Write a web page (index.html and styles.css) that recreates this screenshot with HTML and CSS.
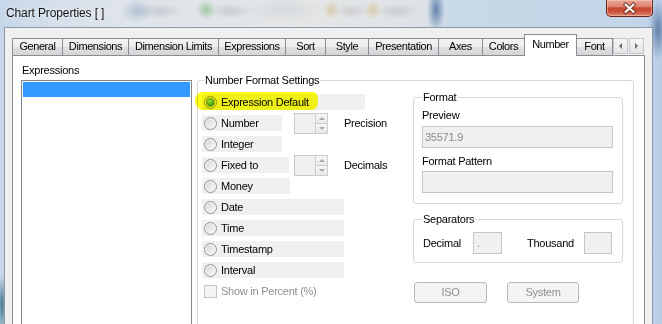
FILE: index.html
```html
<!DOCTYPE html>
<html>
<head>
<meta charset="utf-8">
<title>Chart Properties</title>
<link rel="stylesheet" href="styles.css">
</head>
<body>
<div class="window">
  <div class="titlebar">
    <span class="title">Chart Properties [ ]</span>
    <span class="close">
      <svg width="47" height="17" viewBox="0 0 47 17">
        <path d="M19.5 4.5 L27.5 12 M27.5 4.5 L19.5 12" stroke="#5b2318" stroke-width="4.2" stroke-linecap="square" opacity="0.75" fill="none"/>
        <path d="M19.5 4.5 L27.5 12 M27.5 4.5 L19.5 12" stroke="#ffffff" stroke-width="2.2" stroke-linecap="square" fill="none"/>
      </svg>
    </span>
  </div>
  <div class="client">
    <div class="tabstrip">
      <div class="tab w-general">General</div>
      <div class="tab w-dims">Dimensions</div>
      <div class="tab w-limits">Dimension Limits</div>
      <div class="tab w-expr">Expressions</div>
      <div class="tab w-sort">Sort</div>
      <div class="tab w-style">Style</div>
      <div class="tab w-pres">Presentation</div>
      <div class="tab w-axes">Axes</div>
      <div class="tab w-colors">Colors</div>
      <div class="tab tab-active w-number">Number</div>
      <div class="tab w-font">Font</div>
      <div class="tab-arrows">
        <span class="arrow-btn arrow-left"></span>
        <span class="arrow-btn arrow-right"></span>
      </div>
    </div>
    <div class="panel">
      <div class="expr-col">
        <div class="expr-label">Expressions</div>
        <div class="listbox">
          <div class="list-sel"></div>
        </div>
      </div>
      <div class="group nfs">
        <div class="legend">Number Format Settings</div>
        <div class="nfs-body">
          <div class="opts">
            <div class="opt">
              <div class="optbox ob-default"><span class="radio checked"></span><span>Expression Default</span></div>
              <span class="hl"></span>
            </div>
            <div class="opt">
              <div class="optbox ob-number"><span class="radio"></span><span>Number</span></div>
              <div class="spin sp-number"><div class="spin-field"></div><div class="spin-btns"><div class="spin-up"></div><div class="spin-dn"></div></div></div>
              <span class="spin-label">Precision</span>
            </div>
            <div class="opt">
              <div class="optbox ob-integer"><span class="radio"></span><span>Integer</span></div>
            </div>
            <div class="opt">
              <div class="optbox ob-fixed"><span class="radio"></span><span>Fixed to</span></div>
              <div class="spin sp-fixed"><div class="spin-field"></div><div class="spin-btns"><div class="spin-up"></div><div class="spin-dn"></div></div></div>
              <span class="spin-label">Decimals</span>
            </div>
            <div class="opt">
              <div class="optbox ob-money"><span class="radio"></span><span>Money</span></div>
            </div>
            <div class="opt">
              <div class="optbox ob-wide"><span class="radio"></span><span>Date</span></div>
            </div>
            <div class="opt">
              <div class="optbox ob-wide"><span class="radio"></span><span>Time</span></div>
            </div>
            <div class="opt">
              <div class="optbox ob-wide"><span class="radio"></span><span>Timestamp</span></div>
            </div>
            <div class="opt">
              <div class="optbox ob-wide"><span class="radio"></span><span>Interval</span></div>
            </div>
            <div class="opt check-row">
              <span class="checkbox"></span><span class="disabled-text">Show in Percent (%)</span>
            </div>
          </div>
          <div class="side">
            <div class="group format">
              <div class="legend">Format</div>
              <div class="flabel">Preview</div>
              <div class="field preview">35571.9</div>
              <div class="flabel fl2">Format Pattern</div>
              <div class="field pattern"></div>
            </div>
            <div class="group seps">
              <div class="legend">Separators</div>
              <div class="sep-row">
                <span class="sep-label sl-dec">Decimal</span>
                <span class="field sep-dec">.</span>
                <span class="sep-label sl-thou">Thousand</span>
                <span class="field sep-thou"></span>
              </div>
            </div>
            <div class="btn-row">
              <span class="btn btn-iso">ISO</span>
              <span class="btn btn-sys">System</span>
            </div>
          </div>
        </div>
      </div>
    </div>
  </div>
</div>
</body>
</html>
```

FILE: styles.css
```css
* { box-sizing: border-box; }
html, body { margin: 0; padding: 0; }
body {
  width: 662px;
  height: 324px;
  overflow: hidden;
  font: 11px/13px "Liberation Sans", Arial, sans-serif;
  letter-spacing: -0.25px;
  color: #000;
}

.window {
  width: 662px;
  height: 324px;
  display: flex;
  flex-direction: column;
  overflow: hidden;
  background:
    radial-gradient(ellipse 16px 12px at 137px 11px, rgba(100,130,170,.35), transparent),
    radial-gradient(ellipse 24px 8px at 160px 11px, rgba(90,100,110,.18), transparent),
    radial-gradient(ellipse 10px 10px at 206px 10px, rgba(90,165,90,.45), transparent),
    radial-gradient(ellipse 24px 8px at 230px 11px, rgba(90,100,110,.18), transparent),
    radial-gradient(ellipse 40px 12px at 285px 10px, rgba(190,196,204,.35), transparent),
    radial-gradient(ellipse 9px 10px at 331px 10px, rgba(205,170,90,.4), transparent),
    radial-gradient(ellipse 18px 8px at 351px 11px, rgba(90,90,90,.16), transparent),
    radial-gradient(ellipse 9px 10px at 373px 10px, rgba(205,170,90,.4), transparent),
    radial-gradient(ellipse 22px 8px at 397px 11px, rgba(90,90,90,.16), transparent),
    radial-gradient(ellipse 9px 22px at 436px 10px, rgba(55,95,150,.7), transparent),
    radial-gradient(ellipse 9px 30px at 658px 30px, rgba(60,95,145,.7), transparent),
    radial-gradient(ellipse 5px 30px at 2px 305px, rgba(20,90,110,.75), transparent),
    linear-gradient(90deg, #c6d6e8 0, #d6e0eb 60px, #dfe4ea 125px, #e4e6e6 300px, #dfe3e7 420px, #c9d8e8 450px, #c3d5e8 640px, #b7cde5 662px);
}

/* Title bar */
.titlebar {
  height: 27px;
  flex: none;
  display: flex;
  align-items: flex-start;
}
.title {
  font-size: 12px;
  line-height: 15px;
  letter-spacing: -0.12px;
  padding: 6px 0 0 6px;
  color: #141414;
  text-shadow: 0 0 5px rgba(255,255,255,.9);
}
.close {
  margin-left: auto;
  margin-right: 9px;
  width: 47px;
  height: 17px;
  border: 1px solid #6b2418;
  border-top: none;
  border-radius: 0 0 5px 5px;
  background: linear-gradient(#e9a898 0, #dc8270 40%, #c8472f 50%, #c9503a 70%, #df8a6e 100%);
  box-shadow: inset 0 0 0 1px rgba(255,210,200,.45);
  display: flex;
}

/* Client area */
.client {
  flex: 1;
  margin: 0 9px 0 4px;
  border: 1px solid #8d99a8;
  border-bottom: none;
  background: #f0f0f0;
  padding: 6px 7px 0 7px;
  display: flex;
  flex-direction: column;
  min-height: 0;
}

/* Tabs */
.tabstrip {
  height: 21px;
  flex: none;
  display: flex;
  align-items: flex-end;
  position: relative;
  z-index: 2;
}
.tab {
  height: 17px;
  margin-right: -1px;
  border: 1px solid #898c95;
  border-bottom: none;
  background: linear-gradient(#f4f4f4 0, #ececec 50%, #e0e0e0 51%, #d5d5d5 100%);
  text-align: center;
  padding-top: 1px;
  letter-spacing: -0.42px;
  white-space: nowrap;
}
.tab-active {
  height: 22px;
  margin-bottom: -1px;
  background: #ffffff;
  padding-top: 3px;
  position: relative;
  z-index: 3;
}
.w-general { width: 51px; }
.w-dims { width: 67px; }
.w-limits { width: 91px; }
.w-expr { width: 68px; }
.w-sort { width: 41px; }
.w-style { width: 44px; }
.w-pres { width: 71px; }
.w-axes { width: 45px; }
.w-colors { width: 43px; }
.w-number { width: 53px; }
.w-font { width: 37px; }

.tab-arrows {
  align-self: flex-start;
  margin-top: 4px;
  margin-left: 1px;
  display: flex;
}
.arrow-btn {
  width: 15px;
  height: 16px;
  border: 1px solid #c6c8cc;
  background: linear-gradient(#f6f6f6, #e4e4e4);
  display: flex;
  align-items: center;
  justify-content: center;
}
.arrow-btn + .arrow-btn { margin-left: 1px; }
.arrow-left::after {
  content: "";
  border-top: 3px solid transparent;
  border-bottom: 3px solid transparent;
  border-right: 3px solid #6a6a6a;
}
.arrow-right::after {
  content: "";
  border-top: 3px solid transparent;
  border-bottom: 3px solid transparent;
  border-left: 3px solid #6a6a6a;
}

/* Panel */
.panel {
  flex: 1;
  border: 1px solid #898c95;
  border-bottom: none;
  background: #ffffff;
  display: flex;
  align-items: flex-start;
  min-height: 0;
}
.expr-col {
  padding: 8px 0 0 8px;
}
.expr-label { margin-left: 1px; }
.listbox {
  margin-top: 3px;
  width: 171px;
  height: 260px;
  border: 1px solid #828790;
  padding: 1px;
}
.list-sel {
  height: 15px;
  background: #3399ff;
}

/* Group boxes */
.group {
  border: 1px solid #d5dae0;
  border-radius: 3px;
}
.legend {
  display: block;
  width: max-content;
  margin-top: -7px;
  padding: 0 1px;
  background: #ffffff;
}
.nfs {
  margin-left: 5px;
  margin-top: 24px;
  width: 437px;
  height: 270px;
}
.nfs > .legend { margin-left: 6px; }
.nfs-body {
  display: flex;
  align-items: flex-start;
}

/* Options */
.opts {
  width: 215px;
  padding-left: 4px;
  margin-top: 7px;
}
.opt {
  position: relative;
  height: 16px;
  margin-bottom: 5px;
  display: flex;
  align-items: center;
  white-space: nowrap;
}
.optbox {
  height: 16px;
  background: #f0f0f0;
  display: flex;
  align-items: center;
  padding-left: 2px;
}
.ob-default { width: 163px; }
.ob-number { width: 80px; }
.ob-integer { width: 80px; }
.ob-fixed { width: 87px; }
.ob-money { width: 88px; }
.ob-wide { width: 142px; }

.radio {
  width: 13px;
  height: 13px;
  flex: none;
  margin-right: 4px;
  border-radius: 50%;
  border: 1px solid #939393;
  background: linear-gradient(135deg, #cfcfcf 0, #e8e8e8 50%, #fbfbfb 100%);
  box-shadow: inset 0 0 0 1px #f6f6f6;
  display: flex;
  align-items: center;
  justify-content: center;
}
.radio.checked::after {
  content: "";
  width: 7px;
  height: 7px;
  border-radius: 50%;
  background: radial-gradient(circle at 40% 35%, #a8e8ff 0, #4aa8f0 50%, #1f6cc0 100%);
  box-shadow: 0 0 0 1px rgba(30,90,160,.5);
}
.hl {
  position: absolute;
  left: -7px;
  top: -2px;
  width: 123px;
  height: 18px;
  background: #ffff1a;
  mix-blend-mode: multiply;
  border-radius: 7px 5px 6px 8px / 9px 7px 8px 9px;
}

.spin {
  display: flex;
  width: 34px;
  height: 21px;
  flex: none;
}
.sp-number { margin-left: 12px; }
.sp-fixed { margin-left: 5px; }
.spin-field {
  flex: 1;
  background: #f0f0f0;
  border: 1px solid #c9c9c9;
  border-right: none;
}
.spin-btns {
  width: 13px;
  display: flex;
  flex-direction: column;
}
.spin-up, .spin-dn {
  flex: 1;
  border: 1px solid #cdcdcd;
  background: linear-gradient(#f7f7f7, #e9e9e9);
  display: flex;
  align-items: center;
  justify-content: center;
}
.spin-dn { border-top: none; }
.spin-up::after {
  content: "";
  border-left: 3px solid transparent;
  border-right: 3px solid transparent;
  border-bottom: 3px solid #a8a8a8;
}
.spin-dn::after {
  content: "";
  border-left: 3px solid transparent;
  border-right: 3px solid transparent;
  border-top: 3px solid #a8a8a8;
}
.spin-label { margin-left: 16px; }

.check-row {
  margin-top: 5px;
  padding-left: 2px;
}
.checkbox {
  width: 13px;
  height: 13px;
  flex: none;
  margin-right: 4px;
  border: 1px solid #c4c4c4;
  background: #f4f4f4;
}
.disabled-text { color: #8f8f8f; }

/* Right side */
.side {
  width: 210px;
  margin-top: 10px;
}
.format {
  padding: 0 9px 10px 8px;
}
.flabel { margin-top: 5px; }
.fl2 { margin-top: 7px; }
.field {
  display: block;
  height: 22px;
  background: #f0f0f0;
  border: 1px solid #c6c6c6;
  color: #8a8a8a;
  padding: 4px 0 0 2px;
}
.preview { margin-top: 4px; }
.pattern { margin-top: 3px; }

.seps {
  margin-top: 15px;
  padding: 0 9px 8px 8px;
}
.sep-row {
  margin-top: 6px;
  display: flex;
  align-items: center;
}
.sep-label { flex: none; }
.sl-dec { width: 51px; padding-left: 1px; }
.sl-thou { width: 58px; margin-left: 24px; padding-left: 1px; }
.sep-dec { width: 29px; padding-left: 3px; }
.sep-thou { width: 28px; }

.btn-row {
  margin-top: 19px;
  display: flex;
}
.btn {
  height: 21px;
  border: 1px solid #b5b9bd;
  border-radius: 3px;
  background: #f4f4f4;
  color: #8f8f8f;
  display: flex;
  align-items: center;
  justify-content: center;
}
.btn-iso { width: 73px; margin-left: 1px; }
.btn-sys { width: 72px; margin-left: 20px; }
```
